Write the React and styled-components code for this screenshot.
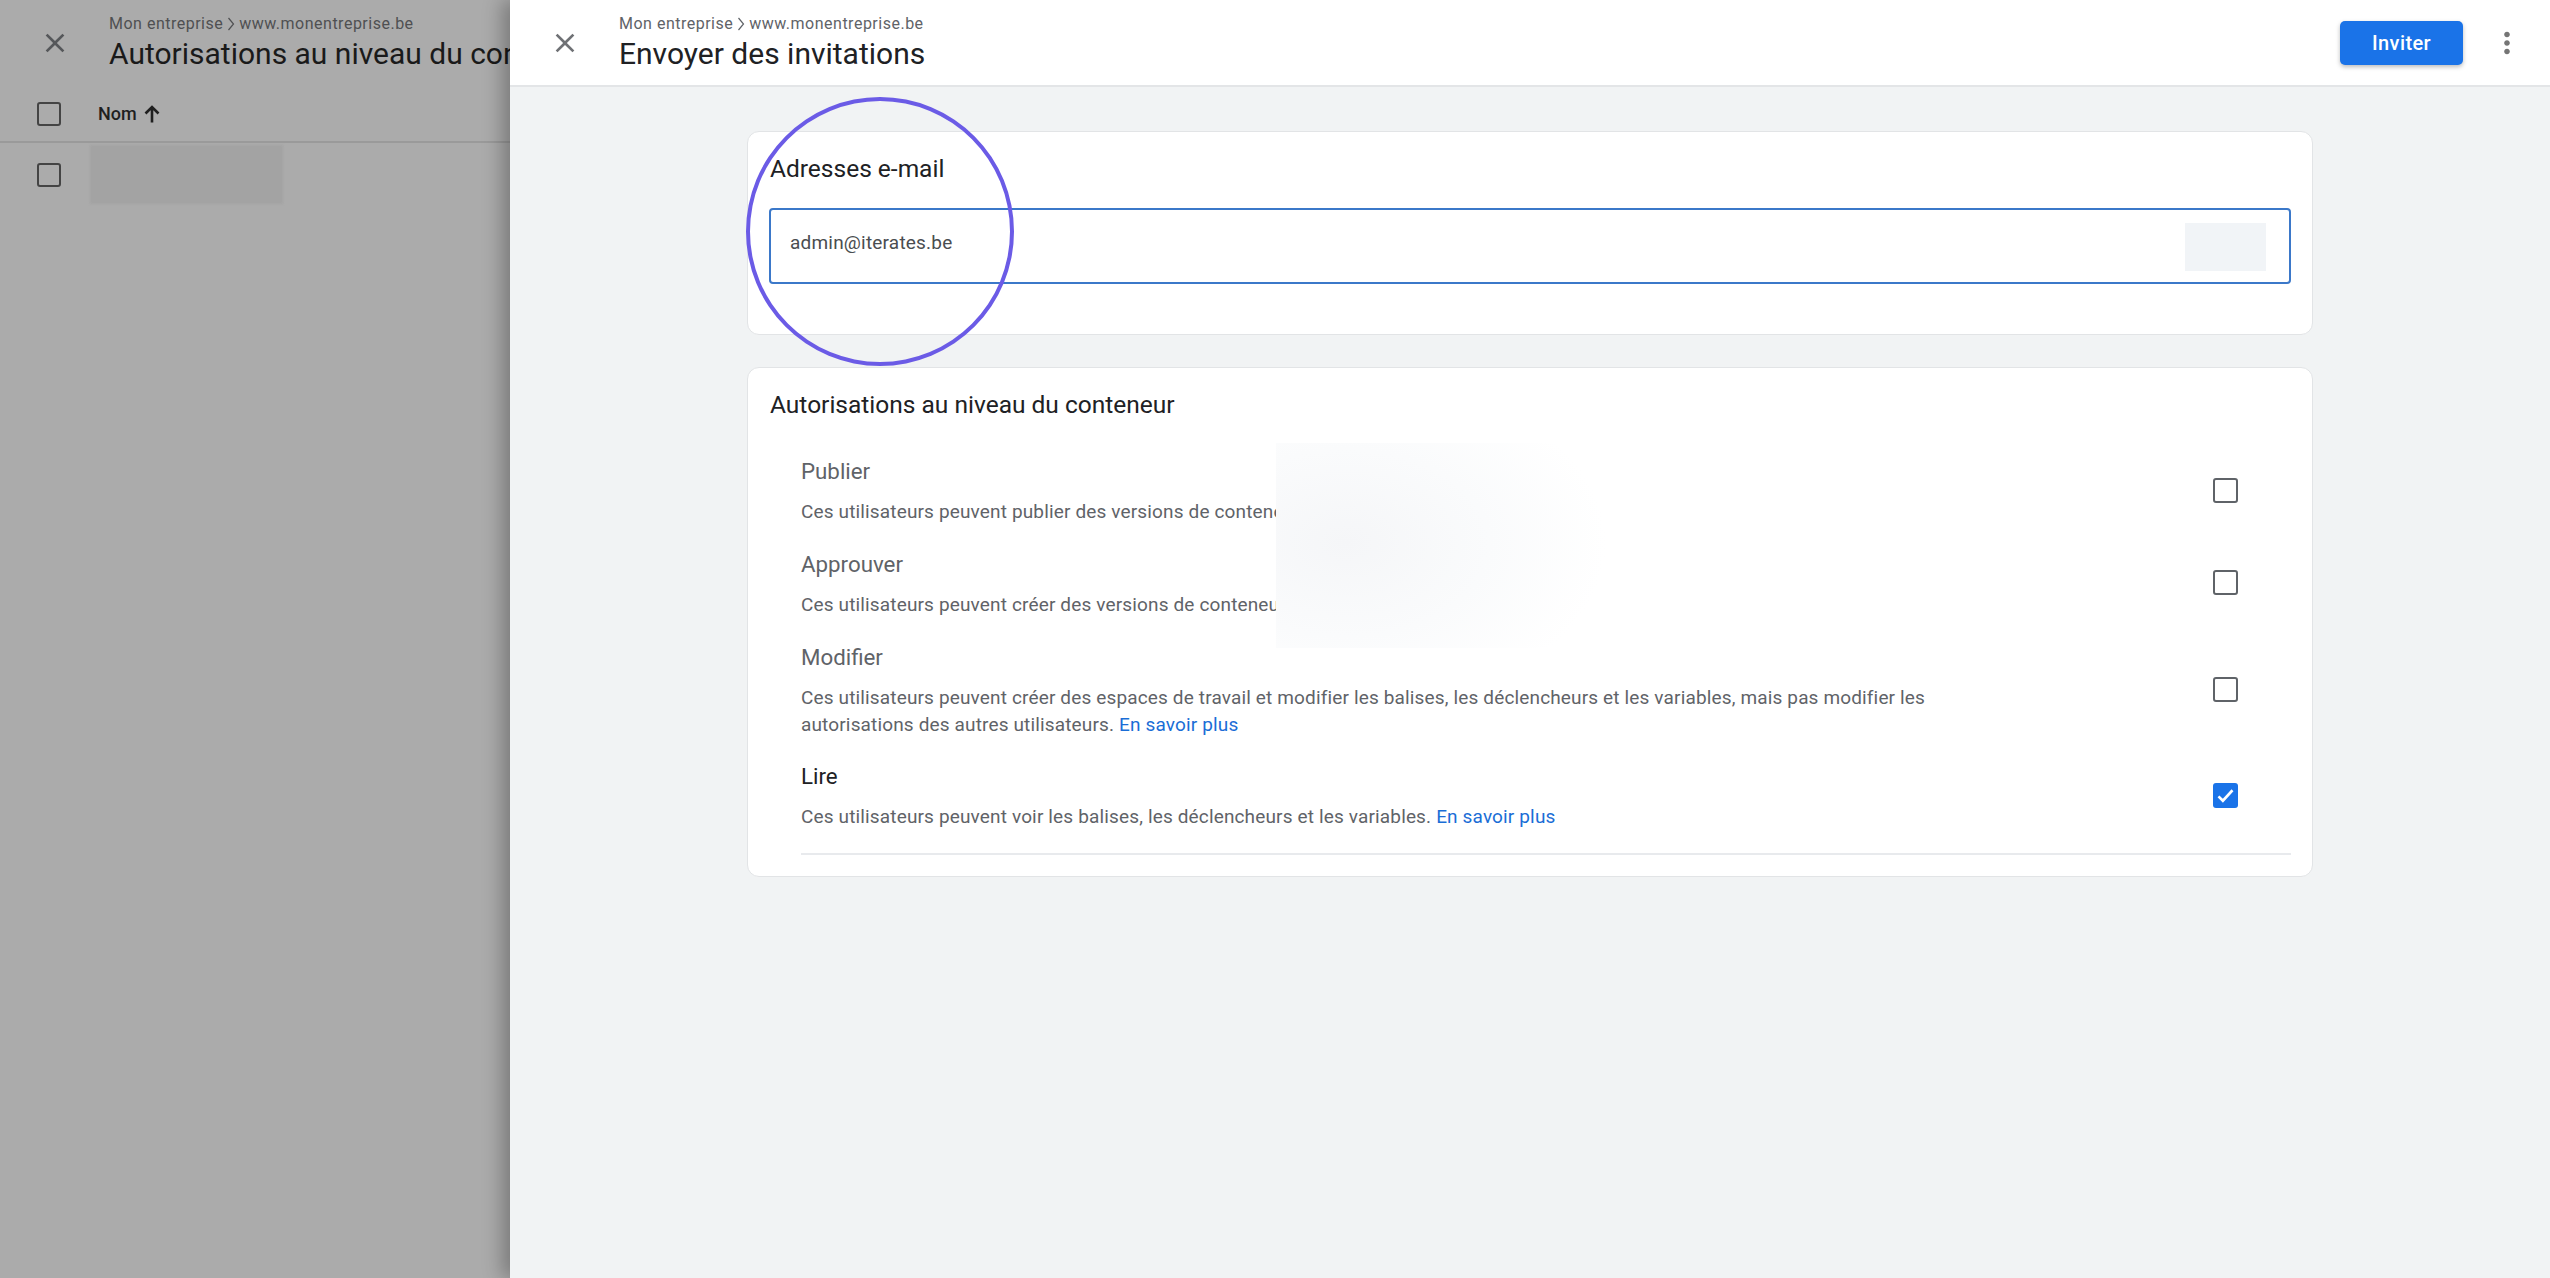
import React from 'react'
import styled, { createGlobalStyle } from 'styled-components'
import { MdClose, MdMoreVert } from 'react-icons/md'

const GlobalStyle = createGlobalStyle`
  html, body {
    margin: 0;
    padding: 0;
    background: #f1f3f4;
  }
  * {
    box-sizing: border-box;
  }
`

const permissions = [
  {
    label: 'Publier',
    text: 'Ces utilisateurs peuvent publier des versions de conteneur.',
    top: 34,
    height: 127,
    checkTop: 23,
  },
  {
    label: 'Approuver',
    text: 'Ces utilisateurs peuvent créer des versions de conteneur.',
    height: 93,
    checkTop: 22,
  },
  {
    label: 'Modifier',
    text: 'Ces utilisateurs peuvent créer des espaces de travail et modifier les balises, les déclencheurs et les variables, mais pas modifier les autorisations des autres utilisateurs.',
    link: true,
    height: 119,
    checkTop: 36,
  },
  {
    label: 'Lire',
    text: 'Ces utilisateurs peuvent voir les balises, les déclencheurs et les variables.',
    link: true,
    active: true,
    height: 93,
    checkTop: 23,
  },
]

const Page = styled.div`
  display: flex;
  width: 2550px;
  height: 1278px;
  overflow: hidden;
  font-family: Roboto, "Liberation Sans", sans-serif;
`

const BackPanel = styled.aside`
  flex: 0 0 510px;
  min-width: 0;
  background: #ababab;
  overflow: hidden;
`

const BackHeader = styled.header`
  display: flex;
  align-items: center;
  height: 86px;
  padding-left: 43px;
`

const CloseButton = styled.button`
  display: flex;
  flex: none;
  align-items: center;
  justify-content: center;
  width: 24px;
  height: 24px;
  margin: 0 42px 0 0;
  padding: 0;
  border: 0;
  background: none;
  color: ${(p) => (p.$muted ? '#55575a' : '#6f7175')};
  font-size: 32px;
  svg {
    flex: none;
  }
`

const HeaderText = styled.div`
  display: flex;
  flex-direction: column;
  white-space: nowrap;
`

const Crumb = styled.div`
  display: flex;
  align-items: center;
  height: 20px;
  color: ${(p) => (p.$muted ? '#4f5052' : '#5f6368')};
  font-size: 16px;
  line-height: 20px;
  letter-spacing: 0.5px;
`

const Title = styled.h1`
  margin: 2px 0 0;
  color: ${(p) => (p.$muted ? '#1a1a1a' : '#202124')};
  font-size: 30px;
  font-weight: 400;
  line-height: 36px;
`

const ListHead = styled.div`
  display: flex;
  align-items: center;
  height: 57px;
  padding-left: 37px;
  border-bottom: 2px solid #9a9a9a;
`

const ListRow = styled.div`
  display: flex;
  align-items: flex-start;
  padding: 2px 0 0 37px;
`

const BackCheck = styled.span`
  display: block;
  flex: none;
  width: 24px;
  height: 24px;
  border: 2.5px solid #444;
  border-radius: 3px;
`

const NameCell = styled.div`
  display: flex;
  align-items: center;
  margin-left: 37px;
  color: #1f1f1f;
  font-size: 18px;
  font-weight: 500;
  svg {
    margin-left: 3px;
  }
`

const BlurredName = styled.div`
  flex: none;
  width: 193px;
  height: 59px;
  margin-left: 29px;
  background: #a3a3a3;
  filter: blur(1px);
`

const RowCheckSlot = styled.div`
  padding-top: 18px;
`

const Sheet = styled.main`
  position: relative;
  display: flex;
  flex: 1;
  flex-direction: column;
  min-width: 0;
  box-shadow: -8px 0 18px rgba(0, 0, 0, 0.28);
`

const SheetHeader = styled.header`
  display: flex;
  flex: none;
  align-items: center;
  height: 87px;
  padding-left: 43px;
  background: #fff;
  border-bottom: 2px solid #e3e5e7;
`

const HeaderActions = styled.div`
  display: flex;
  align-items: center;
  margin-left: auto;
  padding-right: 26px;
  color: #757575;
  font-size: 34px;
`

const InviteButton = styled.button`
  width: 123px;
  height: 44px;
  margin-right: 27px;
  border: 0;
  border-radius: 5px;
  background: #1a73e8;
  box-shadow: 0 2px 4px rgba(60, 64, 67, 0.35);
  color: #fff;
  font-family: inherit;
  font-size: 20px;
  font-weight: 500;
  letter-spacing: 0.4px;
`

const Content = styled.div`
  display: flex;
  flex: 1;
  flex-direction: column;
  gap: 32px;
  padding: 44px 237px 0 237px;
  background: #f1f3f4;
`

const Card = styled.section`
  position: relative;
  padding: ${(p) => p.$padding};
  background: #fff;
  border: 1px solid #e2e4e6;
  border-radius: 12px;
`

const CardTitle = styled.h2`
  margin: 0 0 0 1px;
  color: #202124;
  font-size: 24.5px;
  font-weight: 400;
  line-height: 32px;
`

const EmailBox = styled.div`
  display: flex;
  align-items: center;
  justify-content: space-between;
  height: 76px;
  margin-top: 23px;
  padding: 0 23px 0 19px;
  border: 2.5px solid #3b78c9;
  border-radius: 4px;
  color: #4a4d50;
  font-size: 19px;
  letter-spacing: 0.2px;
`

const EmailText = styled.span`
  margin-top: -8px;
`

const EmailMask = styled.div`
  width: 81px;
  height: 48px;
  margin-top: 2px;
  background: #f1f4f7;
`

const PermissionRow = styled.div`
  display: flex;
  justify-content: space-between;
  height: ${(p) => p.$height}px;
  padding-top: ${(p) => p.$top || 0}px;
`

const PermissionBody = styled.div`
  width: 1150px;
`

const PermissionLabel = styled.div`
  color: ${(p) => (p.$active ? '#202124' : '#5f6368')};
  font-size: 22.3px;
  line-height: 32px;
`

const PermissionText = styled.p`
  margin: 11px 0 0;
  color: #5f6368;
  font-size: 19px;
  line-height: 27px;
  letter-spacing: 0.15px;
`

const LearnMore = styled.a`
  color: #1a6dd6;
  text-decoration: none;
`

const CheckSlot = styled.div`
  display: flex;
  align-items: center;
  justify-content: center;
  width: 25px;
  height: 25px;
  margin: ${(p) => p.$top}px 53px 0 0;
  border: ${(p) => (p.$checked ? '0' : '2.5px solid #5f6368')};
  border-radius: 3px;
  background: ${(p) => (p.$checked ? '#1a73e8' : '#fff')};
`

const Divider = styled.hr`
  margin: 0;
  border: 0;
  border-top: 2px solid #e8eaed;
`

const PermissionList = styled.div`
  padding-left: 32px;
`

const Smudge = styled.div`
  position: absolute;
  top: 75px;
  left: 528px;
  width: 440px;
  height: 205px;
  background: radial-gradient(ellipse 260px 170px at 70px 100px, #f5f6f8 0%, #fafbfc 55%, #fff 100%);
`

const Highlight = styled.div`
  position: absolute;
  top: 97px;
  left: 236px;
  width: 268px;
  height: 269px;
  border: 4.5px solid #6b5be6;
  border-radius: 50%;
`

const CrumbChevron = () => (
  <svg width="16" height="14" viewBox="0 0 16 14" fill="none">
    <path d="M5.5 1l5 6-5 6" stroke="currentColor" strokeWidth="1.2" />
  </svg>
)

const ArrowUp = () => (
  <svg width="24" height="24" viewBox="0 0 24 24" fill="none">
    <path d="M12 20.5V5M5.5 11.5L12 5l6.5 6.5" stroke="currentColor" strokeWidth="2.6" />
  </svg>
)

const App = () => {
  return (
    <Page>
      <GlobalStyle />
      <BackPanel>
        <BackHeader>
          <CloseButton $muted>
            <MdClose />
          </CloseButton>
          <HeaderText>
            <Crumb $muted>
              Mon entreprise
              <CrumbChevron />
              www.monentreprise.be
            </Crumb>
            <Title $muted>Autorisations au niveau du conteneur</Title>
          </HeaderText>
        </BackHeader>
        <ListHead>
          <BackCheck />
          <NameCell>
            Nom
            <ArrowUp />
          </NameCell>
        </ListHead>
        <ListRow>
          <RowCheckSlot>
            <BackCheck />
          </RowCheckSlot>
          <BlurredName />
        </ListRow>
      </BackPanel>
      <Sheet>
        <SheetHeader>
          <CloseButton>
            <MdClose />
          </CloseButton>
          <HeaderText>
            <Crumb>
              Mon entreprise
              <CrumbChevron />
              www.monentreprise.be
            </Crumb>
            <Title>Envoyer des invitations</Title>
          </HeaderText>
          <HeaderActions>
            <InviteButton>Inviter</InviteButton>
            <MdMoreVert />
          </HeaderActions>
        </SheetHeader>
        <Content>
          <Card $padding="21px 21px 50px 21px">
            <CardTitle>Adresses e-mail</CardTitle>
            <EmailBox>
              <EmailText>admin@iterates.be</EmailText>
              <EmailMask />
            </EmailBox>
          </Card>
          <Card $padding="21px 21px 21px 21px">
            <CardTitle>Autorisations au niveau du conteneur</CardTitle>
            <PermissionList>
              {permissions.map((item) => (
                <PermissionRow key={item.label} $height={item.height} $top={item.top}>
                  <PermissionBody>
                    <PermissionLabel $active={item.active}>{item.label}</PermissionLabel>
                    <PermissionText>
                      {item.text}
                      {item.link && (
                        <>
                          {' '}
                          <LearnMore href="#">En savoir plus</LearnMore>
                        </>
                      )}
                    </PermissionText>
                  </PermissionBody>
                  <CheckSlot $checked={item.active} $top={item.checkTop}>
                    {item.active && (
                      <svg width="21" height="21" viewBox="0 0 24 24" fill="none">
                        <path d="M4 13l5 5L20 6" stroke="#fff" strokeWidth="3" />
                      </svg>
                    )}
                  </CheckSlot>
                </PermissionRow>
              ))}
              <Divider />
            </PermissionList>
            <Smudge />
          </Card>
        </Content>
        <Highlight />
      </Sheet>
    </Page>
  )
}

export default App
